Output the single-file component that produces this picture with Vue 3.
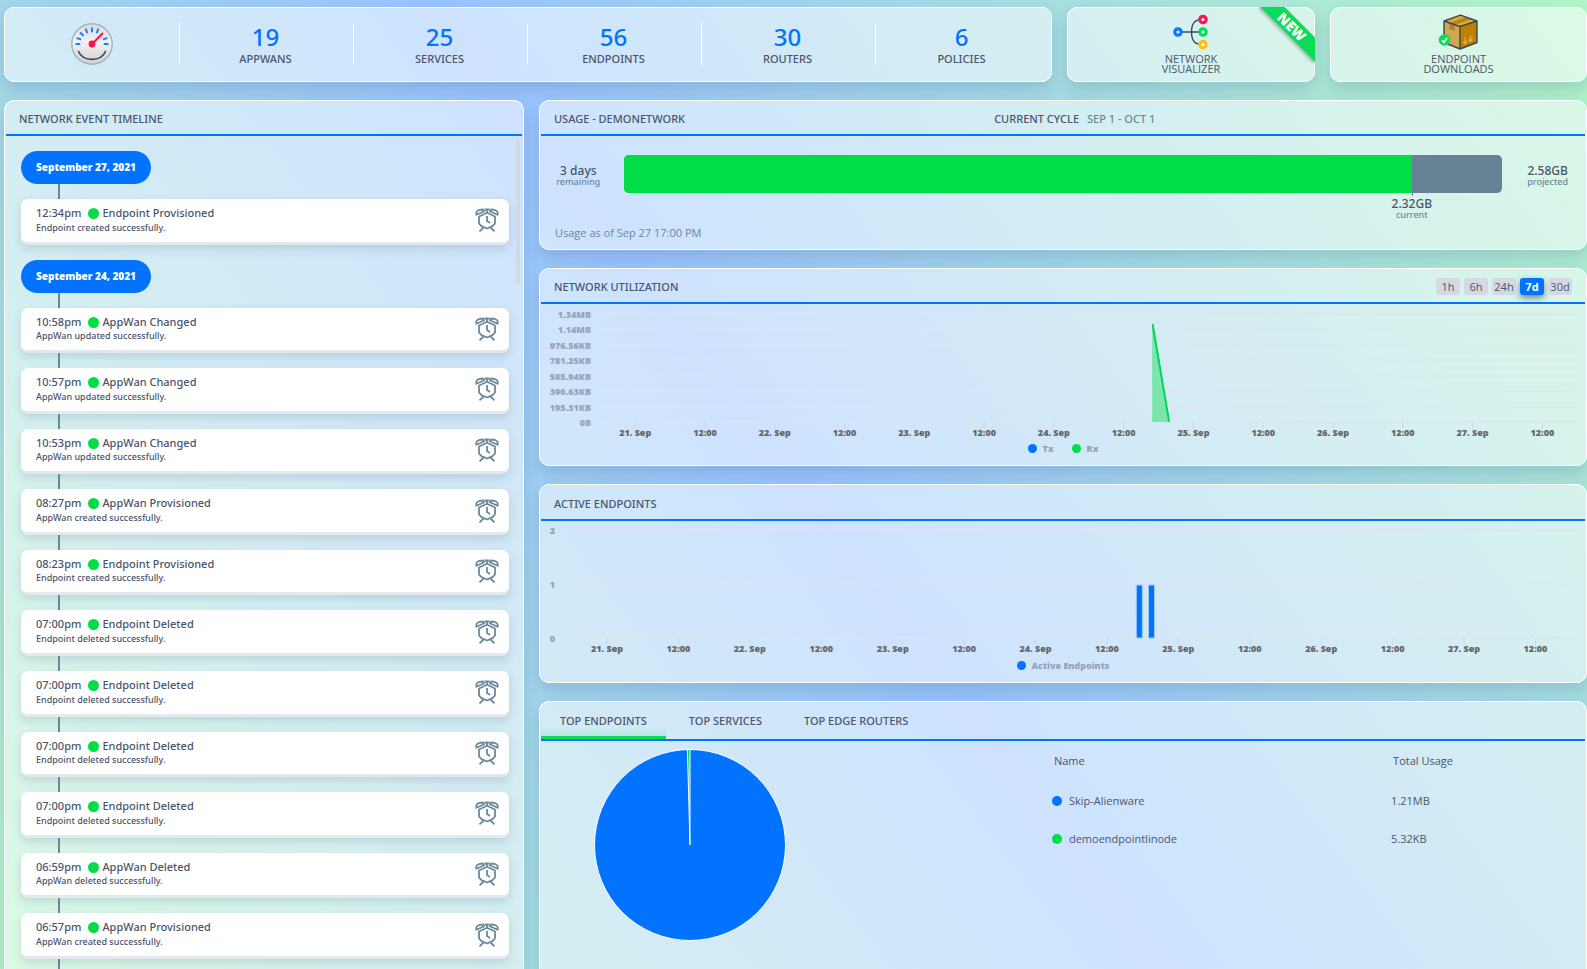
<script setup>
const stats = [
  { value: 19, label: 'APPWANS' },
  { value: 25, label: 'SERVICES' },
  { value: 56, label: 'ENDPOINTS' },
  { value: 30, label: 'ROUTERS' },
  { value: 6, label: 'POLICIES' },
]

const ok = (time, kind, action, verb) => ({
  time,
  title: `${kind} ${action}`,
  text: `${kind} ${verb} successfully.`,
})
const days = [
  { date: 'September 27, 2021', events: [ok('12:34pm', 'Endpoint', 'Provisioned', 'created')] },
  {
    date: 'September 24, 2021',
    events: [
      ok('10:58pm', 'AppWan', 'Changed', 'updated'),
      ok('10:57pm', 'AppWan', 'Changed', 'updated'),
      ok('10:53pm', 'AppWan', 'Changed', 'updated'),
      ok('08:27pm', 'AppWan', 'Provisioned', 'created'),
      ok('08:23pm', 'Endpoint', 'Provisioned', 'created'),
      ok('07:00pm', 'Endpoint', 'Deleted', 'deleted'),
      ok('07:00pm', 'Endpoint', 'Deleted', 'deleted'),
      ok('07:00pm', 'Endpoint', 'Deleted', 'deleted'),
      ok('07:00pm', 'Endpoint', 'Deleted', 'deleted'),
      ok('06:59pm', 'AppWan', 'Deleted', 'deleted'),
      ok('06:57pm', 'AppWan', 'Provisioned', 'created'),
    ],
  },
]

const ranges = ['1h', '6h', '24h', '7d', '30d']
const tabs = ['TOP ENDPOINTS', 'TOP SERVICES', 'TOP EDGE ROUTERS']
const timeLabels = Array.from({ length: 14 }, (_, i) => (i % 2 ? '12:00' : `${21 + i / 2}. Sep`))
const pct = (n) => `${n}%`

const netRows = ['1.34MB', '1.14MB', '976.56KB', '781.25KB', '585.94KB', '390.63KB', '195.31KB', '0B']
const netTicks = timeLabels.map((label, i) => ({ label, x: 3.6 + i * 7.135 }))
const netY = (i) => 8 + Math.round((i * 108) / 7)

const epRows = ['2', '1', '0']
const epTicks = timeLabels.map((label, i) => ({ label, x: 4.15 + i * 7.05 }))
const epY = (i) => 8 + i * 54
const bars = [56.4, 57.6]

const gaugeTicks = [-90, -68, -46, -23, 0, 23, 68, 90]

const top = [
  { name: 'Skip-Alienware', usage: '1.21MB', color: 'blue' },
  { name: 'demoendpointlinode', usage: '5.32KB', color: 'green' },
]
</script>

<template>
  <div class="page">
    <div class="top-row">
      <section class="panel stats">
        <div class="stat">
          <svg class="gauge" viewBox="0 0 42 42" aria-hidden="true">
            <defs>
              <linearGradient id="gaugeFace" x1="0" y1="0" x2="0" y2="1">
                <stop offset="0" stop-color="#d9dadd" />
                <stop offset=".45" stop-color="#f2f2f3" />
                <stop offset="1" stop-color="#cfd1d4" />
              </linearGradient>
            </defs>
            <circle cx="21" cy="21" r="20.2" fill="url(#gaugeFace)" stroke="#a3b0bf" stroke-width="1.4" />
            <line
              v-for="a in gaugeTicks" :key="a" x1="21" y1="4.4" x2="21" y2="9.2"
              stroke="#0a80ff" stroke-width="1.9" :transform="`rotate(${a} 21 21)`"
            />
            <path d="M7.5 28.5C12 39 30 39 34.500 28.500" fill="none" stroke="#3c4657" stroke-width="1.700" stroke-linecap="round" />
            <path d="M21 21L31.500 10.500" stroke="#ff0d4a" stroke-width="1.9" stroke-linecap="round" />
            <circle cx="21" cy="21" r="3.4" fill="#ff0d4a" />
          </svg>
        </div>
        <div v-for="s in stats" :key="s.label" class="stat">
          <strong>{{ s.value }}</strong>
          <span>{{ s.label }}</span>
        </div>
      </section>

      <a class="panel tile" href="#visualizer">
        <svg class="tile-icon" viewBox="0 0 36 36" aria-hidden="true">
          <path d="M6 18H30M29 5.500C21 5.500 18.500 10 18.500 18S21 30.500 29 30.500" fill="none" stroke="#3c4a5f" stroke-width="1.5" />
          <g fill="#fff" stroke-width="3.2">
            <circle cx="5" cy="18" r="3.2" stroke="#0a78ff" />
            <circle cx="30" cy="5.5" r="3.2" stroke="#ff1450" />
            <circle cx="30" cy="18" r="3.2" stroke="#08dc58" />
            <circle cx="30" cy="30.500" r="3.2" stroke="#ffc010" />
          </g>
        </svg>
        <span>NETWORK<br />VISUALIZER</span>
        <b class="ribbon"><i>NEW</i></b>
      </a>

      <a class="panel tile" href="#downloads">
        <svg class="tile-icon box" viewBox="0 0 42 36" aria-hidden="true">
          <path d="M6 7L22 12.500V35L6 28.500Z" fill="#d0a650" />
          <path d="M22 12.500L39 7V28.500L22 35Z" fill="#bd8100" />
          <path d="M6 7L22.500 1.200L39 7L22 12.500Z" fill="#dba930" />
          <path d="M11.500 8.900L28 3.200L33 5L16.500 10.700Z" fill="#b58220" />
          <path d="M11.500 8.900L16.500 10.700V17L11.500 15Z" fill="#b08030" />
          <path d="M6 7L22.500 1.200L39 7V28.500L22 35L6 28.500ZM6 7L22 12.500L39 7M22 12.500V35" fill="none" stroke="#3c4657" stroke-width="1.4" stroke-linejoin="round" />
          <path d="M27 23.500V29.500M25 27.500L27 29.700L29 27M32.500 21.500V27.500M30.500 25.500L32.500 27.700L34.500 25" fill="none" stroke="#dcb252" stroke-width="1.3" />
          <circle cx="6.500" cy="26" r="5.800" fill="#08dc58" />
          <path d="M4 26.200L5.900 28.200L9.200 24" fill="none" stroke="#fff" stroke-width="1.6" />
        </svg>
        <span>ENDPOINT<br />DOWNLOADS</span>
      </a>
    </div>

    <div class="main-row">
      <section class="panel timeline">
        <h2 class="head">NETWORK EVENT TIMELINE</h2>
        <div class="events">
          <template v-for="d in days" :key="d.date">
            <h3 class="date">{{ d.date }}</h3>
            <article v-for="(e, i) in d.events" :key="i" class="event">
              <div>
                <p class="title">
                  <time>{{ e.time }}</time><i class="dot green"></i>{{ e.title }}
                </p>
                <p class="text">{{ e.text }}</p>
              </div>
              <svg class="clock" viewBox="0 0 24 24" fill="none" stroke="#6b8899" stroke-width="1.800" aria-hidden="true">
                <path d="M12 4.800L20 8.500V15.500L17.500 18.200L12 20.500L6.500 18.200L4 15.500V8.500Z" stroke-linejoin="round" />
                <path d="M12 8V13L15 15" />
                <path d="M9.500 1.500H14.500M12 1.500V5" />
                <path d="M1.400 6.800C.6 3.500 2.500 1.500 8 1.500L9.200 3.200Z" stroke-linejoin="round" />
                <path d="M22.600 6.800C23.400 3.500 21.500 1.500 16 1.500L14.800 3.200Z" stroke-linejoin="round" />
                <path d="M8.500 19.500L4.500 23.300M15.500 19.500L19.500 23.300" />
              </svg>
            </article>
          </template>
          <i class="tail"></i>
        </div>
        <i class="scroll-thumb"></i>
      </section>

      <div class="column">
        <section class="panel usage">
          <header class="head usage-head">
            <h2>USAGE - DEMONETWORK</h2>
            <p>CURRENT CYCLE<em>SEP 1 - OCT 1</em></p>
          </header>
          <div class="usage-body">
            <p class="figure">3 days<small>remaining</small></p>
            <div class="bar">
              <div class="used"></div>
              <p class="figure current">2.32GB<small>current</small></p>
            </div>
            <p class="figure">2.58GB<small>projected</small></p>
          </div>
          <p class="as-of">Usage as of Sep 27 17:00 PM</p>
        </section>

        <section class="panel chart-panel">
          <header class="head">
            <h2>NETWORK UTILIZATION</h2>
            <div class="ranges">
              <button v-for="r in ranges" :key="r" type="button" :class="{ on: r === '7d' }">{{ r }}</button>
            </div>
          </header>
          <div class="chart">
            <ul class="y-axis net"><li v-for="r in netRows" :key="r">{{ r }}</li></ul>
            <svg class="plot" aria-label="Network utilization">
              <line v-for="(r, i) in netRows" :key="r" class="grid" x1="0" x2="100%" :y1="netY(i)" :y2="netY(i)" />
              <g v-for="t in netTicks" :key="t.x">
                <line class="tick" :x1="pct(t.x)" :x2="pct(t.x)" y1="116" y2="123" />
                <text :x="pct(t.x)" y="130">{{ t.label }}</text>
              </g>
              <svg x="56.45%" y="18" width="1.800%" height="98" viewBox="0 0 18 98" preserveAspectRatio="none">
                <path d="M0 0V98H18Z" fill="#00dd46" fill-opacity=".42" />
                <path d="M.5 0L17.500 98" stroke="#00d455" stroke-width="2" />
              </svg>
            </svg>
          </div>
          <p class="legend"><span><i class="dot blue"></i>Tx</span><span><i class="dot green"></i>Rx</span></p>
        </section>

        <section class="panel chart-panel active">
          <header class="head"><h2>ACTIVE ENDPOINTS</h2></header>
          <div class="chart">
            <ul class="y-axis count"><li v-for="r in epRows" :key="r">{{ r }}</li></ul>
            <svg class="plot" aria-label="Active endpoints">
              <line v-for="(r, i) in epRows" :key="r" class="grid" x1="0" x2="100%" :y1="epY(i)" :y2="epY(i)" />
              <rect v-for="b in bars" :key="b" :x="pct(b)" y="63" width="6" height="53" fill="#0273ff" stroke="#9ccbff" stroke-width="1" />
              <g v-for="t in epTicks" :key="t.x">
                <line class="tick" :x1="pct(t.x)" :x2="pct(t.x)" y1="116" y2="123" />
                <text :x="pct(t.x)" y="130">{{ t.label }}</text>
              </g>
            </svg>
          </div>
          <p class="legend"><span><i class="dot blue"></i>Active Endpoints</span></p>
        </section>

        <section class="panel top-usage">
          <nav class="tabs">
            <button v-for="(t, i) in tabs" :key="t" type="button" :class="{ on: i === 0 }">{{ t }}</button>
          </nav>
          <div class="top-body">
            <svg class="pie" viewBox="0 0 192 192" aria-label="Usage share">
              <circle cx="96" cy="96" r="95.500" fill="#0273ff" stroke="#fff" stroke-width="1" />
              <path d="M96 96V.5A95.500 95.500 0 0 0 93.400 .54Z" fill="#00dd46" stroke="#fff" stroke-width="1" />
            </svg>
            <table>
              <thead><tr><th>Name</th><th>Total Usage</th></tr></thead>
              <tbody>
                <tr v-for="r in top" :key="r.name">
                  <td><i class="dot" :class="r.color"></i>{{ r.name }}</td>
                  <td>{{ r.usage }}</td>
                </tr>
              </tbody>
            </table>
          </div>
        </section>
      </div>
    </div>
  </div>
</template>

<style>
body { margin: 0; }
</style>

<style scoped>
* { box-sizing: border-box; margin: 0; padding: 0; }
.page {
  height: 100vh;
  overflow: hidden;
  display: flex;
  flex-direction: column;
  gap: 18px;
  padding: 7px 0 0 4px;
  background: linear-gradient(53deg, #b2f5c8, #99c3ff 50%, #b2f5c8);
  font-family: "Noto Sans", "Open Sans", sans-serif;
  font-size: 11px;
  font-weight: 500;
  color: #4a556b;
}
.panel {
  position: relative;
  border: 1px solid #fff;
  border-radius: 10px;
  background: rgba(255, 255, 255, .52);
  box-shadow: 0 8px 16px rgba(60, 90, 120, .2);
}
h2 { font: inherit; }
i { font-style: normal; }
button { font: inherit; color: inherit; border: 0; background: none; }

.top-row { display: grid; grid-template-columns: 1048fr 248fr 257fr; gap: 15px; height: 75px; flex: none; }
.stats { display: grid; grid-template-columns: repeat(6, 1fr); padding: 15px 2px 0 0; }
.stat { display: flex; flex-direction: column; align-items: center; border-left: 1px solid #fff; height: 42px; padding-right: 2px; }
.stat:first-child { border-left-color: transparent; }
.stat strong { font-size: 24px; line-height: 27px; font-weight: 500; color: #0273ff; }
.stat span { line-height: 18px; }
.gauge { width: 42px; height: 42px; }
.tile {
  display: flex; flex-direction: column; align-items: center; gap: 2px;
  padding-top: 6px; color: inherit; text-decoration: none; text-align: center;
  font-family: "Open Sans", "Noto Sans", sans-serif; line-height: 10px;
}
.tile-icon { width: 36px; height: 36px; flex: none; }
.tile-icon.box { width: 42px; }
.tile span { padding-top: 2px; }
.ribbon { position: absolute; top: -1px; right: -1px; width: 56px; height: 56px; overflow: hidden; }
.ribbon i {
  position: absolute; top: 11px; right: -22px; width: 90px; height: 17px; transform: rotate(45deg);
  background: #08dc58; color: #fff; font-size: 14px; font-weight: 800; line-height: 17px; text-align: center;
  box-shadow: 0 2px 4px rgba(0, 0, 0, .3);
}

.main-row { display: grid; grid-template-columns: 520fr 1048fr; gap: 15px; flex: 1; min-height: 0; }
.head {
  display: flex; align-items: center; justify-content: space-between; height: 35px; flex: none;
  padding: 1px 13px 0 13px; border-bottom: 2px solid #0273ff; margin: 0 1px;
}

.timeline { overflow: hidden; border-bottom: 0; border-radius: 10px 10px 0 0; }
.events { display: flex; flex-direction: column; gap: 15px; padding: 15px 14px 0 16px; }
.date {
  position: relative; align-self: flex-start; padding: 0 15px; border-radius: 17px; background: #0273ff; color: #fff;
  font-family: "Open Sans", "Noto Sans", sans-serif; font-size: 10px; font-weight: 800; line-height: 33px;
}
.date::after, .event::before {
  content: ""; position: absolute; left: 37px; width: 2px; height: 15px; background: #6b8899;
}
.date::after { top: 100%; }
.event::before { bottom: 100%; }
.event {
  position: relative; display: flex; align-items: center; justify-content: space-between;
  padding: 5px 10px 5px 15px; border-bottom: 3px solid #e5e9ed; border-radius: 7px;
  background: #fff; box-shadow: 0 4px 10px rgba(60, 90, 120, .18);
}
.date + .event::before { display: none; }
.tail { width: 2px; height: 15px; margin: -15px 0 0 37px; background: #6b8899; }
.title { line-height: 1.69; }
.title .dot { width: 11px; height: 11px; margin: 0 3px 0 7px; vertical-align: -2px; }
.text { font-size: 9px; line-height: 10px; padding-bottom: 4px; }
.clock { width: 24px; height: 24px; }
.scroll-thumb { position: absolute; top: 38px; right: 3px; width: 4px; height: 145px; border-radius: 2px; background: #d3d8e3; }
.dot { display: inline-block; border-radius: 50%; }
.dot.green { background: #00dd46; }
.dot.blue { background: #0273ff; }

.column { display: flex; flex-direction: column; gap: 18px; min-height: 0; }
.usage { height: 150px; flex: none; }
.usage-head { display: grid; grid-template-columns: 441fr 579fr; }
em { font-style: normal; color: #6b8899; margin-left: 8px; }
.usage-body { display: grid; grid-template-columns: 8fr 84fr 8fr; align-items: center; padding-top: 19px; }
.figure { text-align: center; font-size: 12px; line-height: 12px; padding-top: 3px; }
.usage-body > .figure:first-child { padding-right: 7px; }
.usage-body > .figure:last-child { padding-left: 7px; }
.figure small { display: block; font-size: 9px; line-height: 10px; color: #6b8899; }
.bar { position: relative; height: 38px; border-radius: 5px; background: #668294; }
.used { width: 89.700%; height: 100%; border-radius: 5px 0 0 5px; background: #00dd46; }
.current { position: absolute; top: 100%; left: 89.700%; width: 80px; margin-left: -40px; padding-top: 5px; }
.current::before { content: ""; position: absolute; left: 50%; top: -38px; width: 1px; height: 41px; background: #668294; }
.as-of {
  position: absolute; left: 15px; bottom: 7px; line-height: 18px; color: #6b8899;
  font-family: "Open Sans", "Noto Sans", sans-serif;
}

.chart-panel { height: 198px; flex: none; }
.active { height: 199px; }
.active .head { height: 36px; padding-top: 2px; }
.ranges { display: flex; gap: 4px; }
.ranges button {
  width: 24px; height: 17px; line-height: 17px; border-radius: 3px; background: #d5d9e3; text-align: center;
  font-family: "Open Sans", "Noto Sans", sans-serif;
}
.ranges .on { background: #0273ff; color: #fff; font-weight: 700; box-shadow: 0 3px 6px rgba(0, 0, 0, .45); }
.chart {
  display: flex; height: 138px; padding: 2px 8px 0 0;
  font-family: "Open Sans", "Noto Sans", sans-serif; font-size: 9px; font-weight: 800;
}
.active .chart { padding-top: 1px; }
.y-axis { display: flex; flex-direction: column; justify-content: space-between; height: 120px; margin-top: 3px; list-style: none; color: #97a3b7; text-align: right; line-height: 12px; }
.net { width: 60px; padding-right: 9px; }
.count { width: 25px; padding-right: 10px; }
.plot { flex: 1; min-width: 0; width: 100%; height: 136px; overflow: visible; }
.plot text { text-anchor: middle; fill: #666; }
.grid { stroke: #e0e4ec; stroke-width: 1; }
.tick { stroke: #ccd6eb; stroke-width: 1; }
.legend {
  display: flex; justify-content: center; gap: 18px; color: #97a3b7;
  font-family: "Open Sans", "Noto Sans", sans-serif; font-size: 9px; font-weight: 800; line-height: 13px;
}
.legend .dot { width: 9px; height: 9px; margin-right: 6px; vertical-align: -1px; }

.top-usage { flex: 1; min-height: 0; overflow: hidden; border-bottom: 0; border-radius: 10px 10px 0 0; }
.tabs { display: flex; gap: 4px; height: 39px; margin: 0 1px; border-bottom: 2px solid #0273ff; }
.tabs button { padding: 2px 19px 0; border-bottom: 3px solid transparent; }
.tabs .on { border-bottom-color: #08dc58; background: linear-gradient(to top, rgba(8, 220, 88, .14), transparent 9px); }
.top-body { display: flex; padding-top: 8px; }
.pie { width: 192px; height: 192px; margin-left: 54px; flex: none; }
table {
  width: 52.300%; margin-left: auto; border-collapse: collapse; table-layout: fixed; align-self: flex-start;
  font-family: "Open Sans", "Noto Sans", sans-serif;
}
th { width: 62%; font-weight: 500; text-align: left; padding: 0 0 3px 15px; height: 26px; }
td { height: 38px; padding: 0 0 0 13px; font-weight: 400; }
th + th { width: 38%; }
tbody tr:first-child td { height: 44px; padding-top: 6px; }
td .dot { width: 10px; height: 10px; margin-right: 7px; vertical-align: -1px; }
</style>
